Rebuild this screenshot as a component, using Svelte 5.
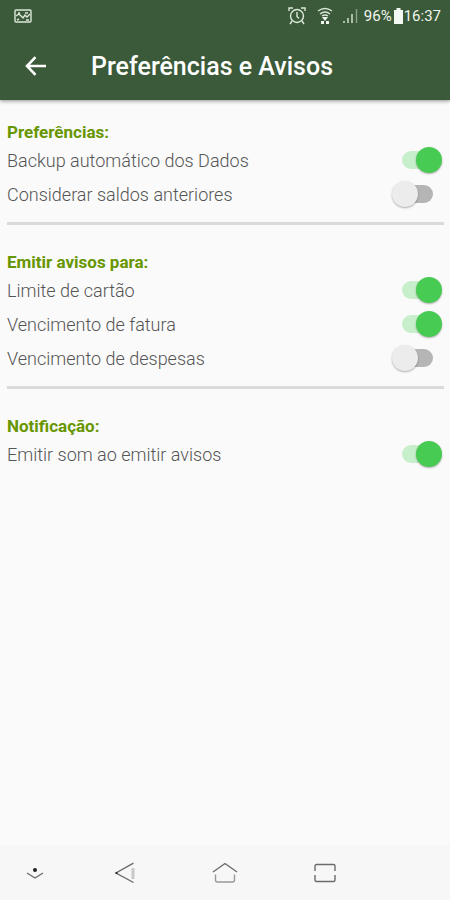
<script lang="ts">
  let sections = [
    {
      title: "Preferências:",
      options: [
        { id: "backup", label: "Backup automático dos Dados", on: true },
        { id: "saldos", label: "Considerar saldos anteriores", on: false },
      ],
    },
    {
      title: "Emitir avisos para:",
      options: [
        { id: "limite", label: "Limite de cartão", on: true },
        { id: "fatura", label: "Vencimento de fatura", on: true },
        { id: "despesas", label: "Vencimento de despesas", on: false },
      ],
    },
    {
      title: "Notificação:",
      options: [{ id: "som", label: "Emitir som ao emitir avisos", on: true }],
    },
  ];
</script>

<div class="screen">
  <header>
    <div class="status">
      <svg class="picture" width="18" height="14" viewBox="0 0 18 14">
        <rect x="1" y="1" width="16" height="12" rx="1" />
        <path d="M2 7l3-2 4 4 2-3 2 2 3-3M4 4h2M11 4h3M3 11l2-1M12 11h3" />
      </svg>
      <svg class="alarm" width="18" height="18" viewBox="0 0 18 18">
        <circle cx="9" cy="9" r="6.5" />
        <path d="M9 5v4.500l2 2M1 4V1h4M13 1h4v3M4 14l-2 3M14 14l2 3" />
      </svg>
      <svg class="wifi" width="16" height="18" viewBox="0 0 16 18">
        <path d="M1 4q7-5 14 0M3 7q5-4 10 0M5 9q3-2 6 0" />
        <path class="solid" d="M5 10h6l-3 4zM4 17v-3h3v3zM9 14h3v3H9z" />
      </svg>
      <svg class="signal" width="16" height="16" viewBox="0 0 16 16">
        <path d="M2 15v-2M6 15v-5M10 15V6" />
        <path class="faint" d="M14.500 15V1" />
      </svg>
      <span>96%</span>
      <svg class="battery" width="9" height="16" viewBox="0 0 9 16">
        <path class="solid" d="M2.500 0h4v2H9v14H0V2h2.500z" />
      </svg>
      <span>16:37</span>
    </div>
    <div class="toolbar">
      <button class="back" aria-label="Voltar">
        <svg width="22" height="20" viewBox="0 0 22 20">
          <path d="M21 10H2.500M10.500 1.200L2 10l8.500 8.800" />
        </svg>
      </button>
      <h1>Preferências e Avisos</h1>
    </div>
  </header>

  <main>
    {#each sections as section}
      <section>
        <h2>{section.title}</h2>
        {#each section.options as option}
          <div class="option">
            <label for={option.id}>{option.label}</label>
            <input
              type="checkbox"
              role="switch"
              id={option.id}
              bind:checked={option.on}
            />
          </div>
        {/each}
      </section>
    {/each}
  </main>

  <nav>
    <button class="hide" aria-label="Ocultar barra">
      <svg width="18" height="14" viewBox="0 0 18 14">
        <circle cx="9" cy="4" r="2" />
        <path d="M1 7l8 5 8-5" />
      </svg>
    </button>
    <button aria-label="Voltar">
      <svg width="20" height="22" viewBox="0 0 20 22">
        <path d="M18.500 1.200L1 11l17.500 9.500" />
        <path class="light" d="M18 6v11" />
        <circle cx="1.500" cy="11" r="1" />
      </svg>
    </button>
    <button aria-label="Início">
      <svg width="26" height="22" viewBox="0 0 26 22">
        <path d="M1 10L13 1.500 25 10" />
        <path class="soft" d="M3.500 12.500V18q0 2 2 2h15q2 0 2-2v-5.500" />
      </svg>
    </button>
    <button aria-label="Recentes">
      <svg width="22" height="20" viewBox="0 0 22 20">
        <path d="M1 8V3q0-1.500 1.500-1.500h17Q21 1.500 21 3v5" />
        <path d="M1 12v5q0 1.500 1.500 1.500h17Q21 18.500 21 17v-5" />
      </svg>
    </button>
  </nav>
</div>

<style>
  :global(body) {
    background-color: #fafafa;
  }
  .screen {
    min-height: 100vh;
    display: flex;
    flex-direction: column;
    font-family: Roboto, sans-serif;
  }
  svg {
    display: block;
    fill: none;
  }
  button {
    display: flex;
    align-items: center;
    justify-content: center;
    background: none;
    border: none;
    padding: 0;
    cursor: pointer;
  }

  header {
    background-color: #3b5a39;
    color: #fff;
    box-shadow: 0 1px 4px #00000070;
  }
  .status {
    display: flex;
    align-items: center;
    height: 32px;
    padding: 0 9px 0 14px;
    font-size: 15px;
    color: #f0f5ef;
  }
  .status svg {
    stroke: #dce8da;
    stroke-width: 1.4;
  }
  .status .solid {
    fill: #f4f8f3;
    stroke: none;
  }
  .status .faint {
    stroke: #8da28b;
  }
  .picture {
    margin-right: auto;
  }
  .wifi {
    margin: 0 9px 0 11px;
  }
  .signal {
    margin-right: 6px;
  }
  .battery {
    margin: 0 1px 0 2px;
  }
  .toolbar {
    display: flex;
    align-items: center;
    height: 68px;
    padding-left: 16px;
  }
  .back {
    width: 40px;
    height: 40px;
    margin-right: 35px;
  }
  .back svg {
    stroke: #fff;
    stroke-width: 2.6;
  }
  h1 {
    margin: 0;
    font-size: 25px;
    font-weight: 500;
  }

  main {
    flex: 1;
    padding: 21px 6px 0 7px;
  }
  section + section {
    margin-top: 11px;
    border-top: 3px solid #dadada;
    padding-top: 26px;
  }
  h2 {
    margin: 0;
    font-size: 17px;
    line-height: 22px;
    font-weight: 700;
    color: #689600;
  }
  .option {
    display: flex;
    align-items: center;
    height: 34px;
    padding-right: 2px;
  }
  label {
    flex: 1;
    font-size: 18px;
    font-weight: 300;
    color: #555;
  }
  input {
    appearance: none;
    position: relative;
    width: 50px;
    height: 26px;
    margin: 0;
    cursor: pointer;
  }
  input::before {
    content: "";
    position: absolute;
    inset: 4px 9px 4px 10px;
    border-radius: 9px;
    background-color: #b5b5b5;
  }
  input::after {
    content: "";
    position: absolute;
    top: 0;
    left: 0;
    width: 26px;
    height: 26px;
    border-radius: 50%;
    background-color: #ececec;
    box-shadow: 0 1px 2px #00000050;
  }
  input:checked::before {
    background-color: #c8efcb;
  }
  input:checked::after {
    left: 24px;
    background-color: #48cb52;
  }

  nav {
    display: grid;
    grid-template-columns: 75px repeat(3, 1fr);
    height: 55px;
    padding-right: 75px;
    background-color: #f7f7f7;
  }
  nav svg {
    stroke: #6b6b6b;
    stroke-width: 1.4;
  }
  nav circle {
    fill: #222;
    stroke: none;
  }
  nav .light {
    stroke: #c8c8c8;
    stroke-width: 3;
  }
  nav .soft {
    stroke: #999;
  }
  .hide {
    padding-right: 5px;
  }
</style>
